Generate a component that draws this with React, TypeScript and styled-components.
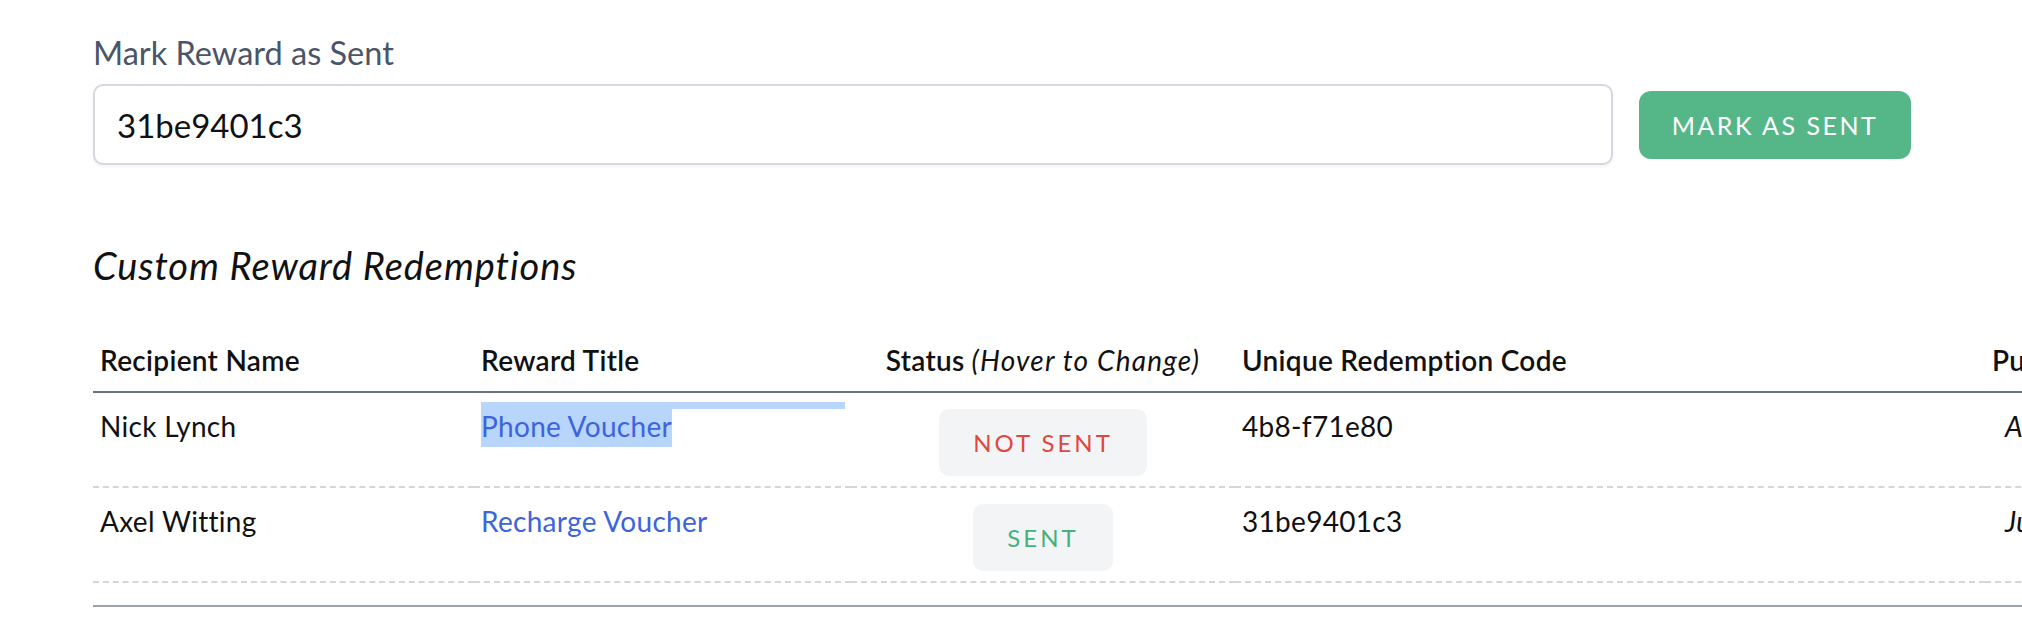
import React from 'react'
import styled, { createGlobalStyle } from 'styled-components'

const GlobalStyle = createGlobalStyle`
  html, body {
    margin: 0;
    padding: 0;
    background: #ffffff;
    overflow: hidden;
  }
  body {
    font-family: Lato, "Noto Sans", Arial, sans-serif;
    color: #1a1a1a;
  }
`

const Page = styled.div`
  width: 2022px;
  padding: 32px 0 0 93px;
  box-sizing: border-box;
`

const Label = styled.label`
  display: block;
  font-size: 32.5px;
  line-height: 42px;
  font-weight: 400;
  color: #4a5568;
  margin-bottom: 10px;
`

const FormRow = styled.div`
  display: flex;
  align-items: center;
  gap: 26px;
`

const TextInput = styled.input.attrs({ type: 'text' })`
  width: 1520px;
  height: 81px;
  box-sizing: border-box;
  padding: 0 22px;
  border: 2px solid #d5d8de;
  border-radius: 10px;
  box-shadow: 0 2px 3px rgba(0, 0, 0, 0.05);
  font-family: Lato, "Noto Sans", Arial, sans-serif;
  font-size: 33px;
  color: #111;
  outline: none;
`

const SubmitButton = styled.button`
  width: 272px;
  height: 68px;
  border: none;
  border-radius: 12px;
  background: #55b787;
  color: #ffffff;
  font-family: Lato, "Noto Sans", Arial, sans-serif;
  font-size: 25px;
  letter-spacing: 2.5px;
  text-transform: uppercase;
  cursor: pointer;
`

const Heading = styled.h2`
  margin: 74px 0 38px;
  font-size: 38px;
  line-height: 52px;
  letter-spacing: 0.9px;
  font-weight: 400;
  font-style: italic;
  color: #111;
`

const TableWrap = styled.div`
  width: 2200px;
  padding-bottom: 22px;
  border-bottom: 2px solid #9ca3af;
`

const Table = styled.table`
  width: 2200px;
  table-layout: fixed;
  border-collapse: collapse;
`

const Th = styled.th<{ $center?: boolean }>`
  padding: 10px 7px;
  font-size: 28px;
  line-height: 42px;
  letter-spacing: 0.3px;
  font-weight: 600;
  text-align: ${(p) => (p.$center ? 'center' : 'left')};
  color: #111;
  white-space: nowrap;
  border-bottom: 2px solid #6b7280;
`

const Hint = styled.em`
  font-weight: 400;
  margin-left: 7px;
  letter-spacing: 1.2px;
`

const Row = styled.tr`
  border-bottom: 2px dashed #d4d6db;
`

const Td = styled.td<{ $center?: boolean; $italic?: boolean }>`
  padding: ${(p) => (p.$center ? '16px 7px 10px' : '12px 7px 10px')};
  vertical-align: top;
  font-size: 28px;
  line-height: 42px;
  letter-spacing: 0.3px;
  text-align: ${(p) => (p.$center ? 'center' : 'left')};
  font-style: ${(p) => (p.$italic ? 'italic' : 'normal')};
  color: #111;
  white-space: nowrap;
`

const RewardLink = styled.a<{ $selected?: boolean }>`
  position: relative;
  color: #3d63dd;
  text-decoration: none;
  background: ${(p) => (p.$selected ? '#b8d5fb' : 'transparent')};
  padding-bottom: 4px;

  ${(p) =>
    p.$selected &&
    `
    &::before {
      content: '';
      position: absolute;
      left: 0;
      top: -7px;
      width: 364px;
      height: 7px;
      background: #b8d5fb;
    }
  `}
`

const StatusButton = styled.button<{ $sent: boolean }>`
  height: 67px;
  padding: 0 34px;
  border: none;
  border-radius: 10px;
  background: #f3f4f6;
  color: ${(p) => (p.$sent ? '#48b07a' : '#e0473f')};
  font-family: Lato, "Noto Sans", Arial, sans-serif;
  font-size: 24px;
  letter-spacing: 3px;
  text-transform: uppercase;
  cursor: pointer;
`

interface Redemption {
  recipient: string
  reward: string
  sent: boolean
  code: string
  purchased: string
  selected?: boolean
}

const redemptions: Redemption[] = [
  { recipient: 'Nick Lynch', reward: 'Phone Voucher', sent: false, code: '4b8-f71e80', purchased: 'Apr 12, 2021', selected: true },
  { recipient: 'Axel Witting', reward: 'Recharge Voucher', sent: true, code: '31be9401c3', purchased: 'Jun 3, 2021' },
]

function App() {
  return (
    <>
      <GlobalStyle />
      <Page>
        <Label>Mark Reward as Sent</Label>
        <FormRow>
          <TextInput defaultValue="31be9401c3" />
          <SubmitButton>Mark as Sent</SubmitButton>
        </FormRow>

        <Heading>Custom Reward Redemptions</Heading>

        <TableWrap>
          <Table>
            <colgroup>
              <col style={{ width: 381 }} />
              <col style={{ width: 377 }} />
              <col style={{ width: 384 }} />
              <col style={{ width: 750 }} />
              <col style={{ width: 308 }} />
            </colgroup>
            <thead>
              <tr>
                <Th>Recipient Name</Th>
                <Th>Reward Title</Th>
                <Th $center>
                  Status<Hint>(Hover to Change)</Hint>
                </Th>
                <Th>Unique Redemption Code</Th>
                <Th>Purchased On</Th>
              </tr>
            </thead>
            <tbody>
              {redemptions.map((r) => (
                <Row key={r.code}>
                  <Td>{r.recipient}</Td>
                  <Td>
                    <RewardLink href="#" $selected={r.selected}>
                      {r.reward}
                    </RewardLink>
                  </Td>
                  <Td $center>
                    <StatusButton $sent={r.sent}>{r.sent ? 'Sent' : 'Not Sent'}</StatusButton>
                  </Td>
                  <Td>{r.code}</Td>
                  <Td $italic>&nbsp;&nbsp;{r.purchased}</Td>
                </Row>
              ))}
            </tbody>
          </Table>
        </TableWrap>
      </Page>
    </>
  )
}

export default App
